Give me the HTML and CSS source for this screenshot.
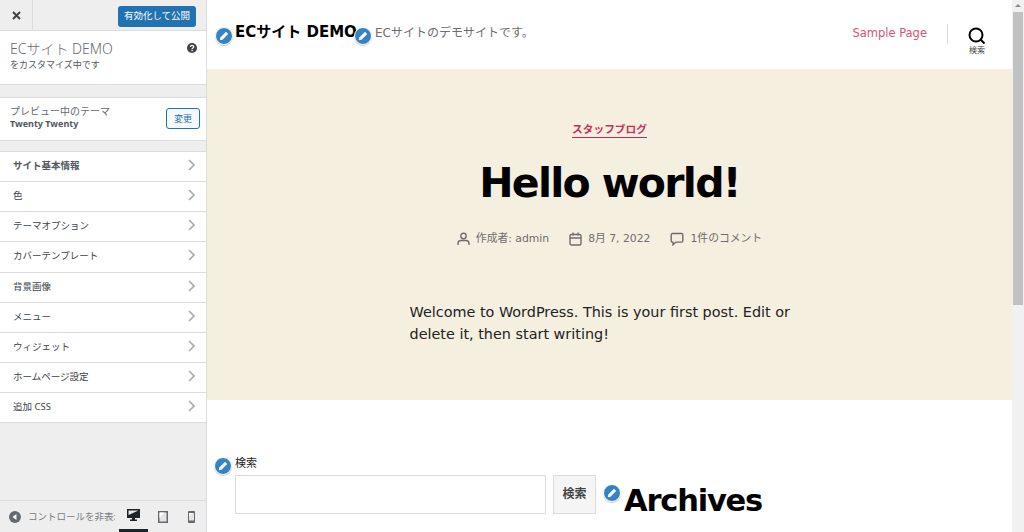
FILE: index.html
```html
<!DOCTYPE html>
<html>

<head>
    <meta charset="utf-8">
    <title>カスタマイズ: ECサイト DEMO</title>
    <link rel="stylesheet" href="styles.css">
</head>

<body>
    <div class="app">
        <aside class="panel">
            <div class="panel-top">
                <div class="close-btn">
                    <svg width="9" height="9" viewBox="0 0 9 9"><path d="M1 1l7 7M8 1l-7 7" stroke="#3c434a" stroke-width="2"/></svg>
                </div>
                <div class="publish-btn">有効化して公開</div>
            </div>
            <div class="info-box">
                <div>
                    <div class="info-title">ECサイト DEMO</div>
                    <div class="info-sub">をカスタマイズ中です</div>
                </div>
                <svg class="help" width="10" height="10" viewBox="0 0 10 10"><circle cx="5" cy="5" r="5" fill="#3c434a"/><path d="M3.4 3.9c0-2.1 3.3-2.1 3.3-.1 0 1.200-1.600 1.200-1.600 2.300" fill="none" stroke="#fff" stroke-width="1.200"/><rect x="4.400" y="6.800" width="1.400" height="1.400" fill="#fff"/></svg>
            </div>
            <div class="theme-box">
                <div>
                    <div class="theme-label">プレビュー中のテーマ</div>
                    <div class="theme-name">Twenty Twenty</div>
                </div>
                <div class="change-btn">変更</div>
            </div>
            <ul class="menu">
                <li class="bold">サイト基本情報<svg class="chev" width="7" height="12" viewBox="0 0 7 12"><path d="M1 1l5 5-5 5" fill="none" stroke="#a7aaad" stroke-width="1.600"/></svg></li>
                <li>色<svg class="chev" width="7" height="12" viewBox="0 0 7 12"><path d="M1 1l5 5-5 5" fill="none" stroke="#a7aaad" stroke-width="1.600"/></svg></li>
                <li>テーマオプション<svg class="chev" width="7" height="12" viewBox="0 0 7 12"><path d="M1 1l5 5-5 5" fill="none" stroke="#a7aaad" stroke-width="1.600"/></svg></li>
                <li>カバーテンプレート<svg class="chev" width="7" height="12" viewBox="0 0 7 12"><path d="M1 1l5 5-5 5" fill="none" stroke="#a7aaad" stroke-width="1.600"/></svg></li>
                <li>背景画像<svg class="chev" width="7" height="12" viewBox="0 0 7 12"><path d="M1 1l5 5-5 5" fill="none" stroke="#a7aaad" stroke-width="1.600"/></svg></li>
                <li>メニュー<svg class="chev" width="7" height="12" viewBox="0 0 7 12"><path d="M1 1l5 5-5 5" fill="none" stroke="#a7aaad" stroke-width="1.600"/></svg></li>
                <li>ウィジェット<svg class="chev" width="7" height="12" viewBox="0 0 7 12"><path d="M1 1l5 5-5 5" fill="none" stroke="#a7aaad" stroke-width="1.600"/></svg></li>
                <li>ホームページ設定<svg class="chev" width="7" height="12" viewBox="0 0 7 12"><path d="M1 1l5 5-5 5" fill="none" stroke="#a7aaad" stroke-width="1.600"/></svg></li>
                <li>追加 CSS<svg class="chev" width="7" height="12" viewBox="0 0 7 12"><path d="M1 1l5 5-5 5" fill="none" stroke="#a7aaad" stroke-width="1.600"/></svg></li>
            </ul>
            <div class="panel-foot">
                <svg width="12" height="12" viewBox="0 0 12 12"><circle cx="6" cy="6" r="6" fill="#646970"/><path d="M7.500 3v6L3.500 6z" fill="#fff"/></svg>
                <div class="hide-label">コントロールを非表示</div>
                <div class="device active">
                    <svg width="13" height="12" viewBox="0 0 13 12"><path d="M0 0h13v9H8v1.500h2V12H3v-1.500h2V9H0z" fill="#1d2327"/><path d="M1.500 1.500h10L1.500 6z" fill="#e8e8e8"/></svg>
                </div>
                <div class="device">
                    <svg width="10" height="12" viewBox="0 0 10 12"><path d="M0 0h10v12H0z" fill="#646970"/><path d="M1.500 1.500h7v9h-7z" fill="#e4e4e4"/><path d="M1.500 1.500h5L1.500 7z" fill="#fff"/></svg>
                </div>
                <div class="device">
                    <svg width="7" height="12" viewBox="0 0 7 12"><rect width="7" height="12" rx="1" fill="#646970"/><path d="M1 2h5v7.500H1z" fill="#e4e4e4"/><path d="M1 2h3.500L1 6z" fill="#fff"/></svg>
                </div>
            </div>
        </aside>

        <main class="preview">
            <header class="site-head">
                <div class="brand">
                    <div class="site-name">ECサイト DEMO</div>
                    <div class="site-desc">ECサイトのデモサイトです。</div>
                </div>
                <nav class="site-nav">
                    <a class="nav-link">Sample Page</a>
                    <div class="nav-sep"></div>
                    <div class="search-toggle">
                        <svg width="18" height="18" viewBox="0 0 18 18"><circle cx="8" cy="8" r="6.500" fill="none" stroke="#000" stroke-width="2"/><path d="M12.500 12.500l4 4" stroke="#000" stroke-width="2"/></svg>
                        <span>検索</span>
                    </div>
                </nav>
                <span class="pencil pencil-name"><svg width="10" height="10" viewBox="0 0 10 10"><path d="M7 .8L9.200 3 3.500 8.700.8 9.200l.5-2.700z" fill="#fff"/></svg></span>
                <span class="pencil pencil-desc"><svg width="10" height="10" viewBox="0 0 10 10"><path d="M7 .8L9.200 3 3.500 8.700.8 9.200l.5-2.700z" fill="#fff"/></svg></span>
            </header>

            <section class="hero">
                <a class="category">スタッフブログ</a>
                <h1 class="post-title">Hello world!</h1>
                <div class="post-meta">
                    <span class="meta-item"><svg width="13" height="14" viewBox="0 0 13 14"><circle cx="6.500" cy="4" r="2.700" fill="none" stroke="#6d6d6d" stroke-width="1.400"/><path d="M1 13v-1.500c0-2 1.500-3 3-3h5c1.500 0 3 1 3 3V13" fill="none" stroke="#6d6d6d" stroke-width="1.400"/></svg>作成者: admin</span>
                    <span class="meta-item"><svg width="13" height="14" viewBox="0 0 13 14"><rect x="1" y="2.500" width="11" height="10.500" rx="1.500" fill="none" stroke="#6d6d6d" stroke-width="1.400"/><path d="M1 6h11M4 .5v3M9 .5v3" stroke="#6d6d6d" stroke-width="1.400"/></svg>8月 7, 2022</span>
                    <span class="meta-item"><svg width="14" height="14" viewBox="0 0 14 14"><path d="M2.500 1.500h9c.7 0 1.300.6 1.300 1.300v6c0 .7-.6 1.300-1.300 1.300H6L3 12.800V10.100h-.5c-.7 0-1.300-.6-1.300-1.300v-6c0-.7.6-1.300 1.300-1.300z" fill="none" stroke="#6d6d6d" stroke-width="1.400"/></svg>1件のコメント</span>
                </div>
                <p class="post-body">Welcome to WordPress. This is your first post. Edit or delete it, then start writing!</p>
            </section>

            <section class="widgets">
                <div class="search-widget">
                    <label class="search-label">検索</label>
                    <div class="search-row">
                        <div class="search-input"></div>
                        <div class="search-btn">検索</div>
                    </div>
                </div>
                <h2 class="archives">Archives</h2>
                <span class="pencil pencil-search"><svg width="10" height="10" viewBox="0 0 10 10"><path d="M7 .8L9.200 3 3.500 8.700.8 9.200l.5-2.700z" fill="#fff"/></svg></span>
                <span class="pencil pencil-arch"><svg width="10" height="10" viewBox="0 0 10 10"><path d="M7 .8L9.200 3 3.500 8.700.8 9.200l.5-2.700z" fill="#fff"/></svg></span>
            </section>

            <div class="scrollbar">
                <div class="scroll-arrow"></div>
                <div class="scroll-thumb"></div>
            </div>
        </main>
    </div>
</body>

</html>
```

FILE: styles.css
```css
* {
    box-sizing: border-box;
}

html, body {
    margin: 0;
    height: 100%;
    overflow: hidden;
}

body {
    font-family: "Noto Sans", "Noto Sans CJK JP", sans-serif;
    background: #fff;
}

.app {
    display: flex;
    height: 532px;
}

/* left panel */
.panel {
    width: 207px;
    flex: none;
    display: flex;
    flex-direction: column;
    background: #eeeeee;
    border-right: 1px solid #dcdcde;
    color: #50575e;
}

.panel-top {
    height: 31px;
    display: flex;
    align-items: center;
    justify-content: space-between;
    padding: 2px 10px 0 0;
    border-bottom: 1px solid #dcdcde;
}

.close-btn {
    width: 33px;
    height: 30px;
    margin-top: -2px;
    display: flex;
    align-items: center;
    justify-content: center;
    border-right: 1px solid #dcdcde;
}

.publish-btn {
    width: 78px;
    height: 21px;
    background: #2271b1;
    border-radius: 3px;
    color: #fff;
    font-size: 9.5px;
    line-height: 20px;
    text-align: center;
}

.info-box {
    height: 54px;
    background: #fff;
    display: flex;
    justify-content: space-between;
    padding: 9px 9px 0 10px;
    border-bottom: 1px solid #dcdcde;
}

.info-title {
    font-size: 14px;
    line-height: 17px;
    font-weight: 300;
    color: #646970;
}

.info-sub {
    margin-top: 1px;
    font-size: 9px;
    line-height: 14px;
    color: #50575e;
}

.help {
    margin-top: 3px;
}

.theme-box {
    height: 44px;
    margin-top: 12px;
    background: #fff;
    display: flex;
    align-items: center;
    justify-content: space-between;
    padding: 0 6px 3px 10px;
    border-top: 1px solid #dcdcde;
    border-bottom: 1px solid #dcdcde;
}

.theme-label {
    font-size: 10px;
    line-height: 13px;
    color: #646970;
}

.theme-name {
    font-size: 9px;
    line-height: 12px;
    font-weight: 700;
    color: #50575e;
}

.change-btn {
    width: 34px;
    height: 21px;
    margin-top: 1px;
    border: 1px solid #2271b1;
    border-radius: 3px;
    background: #f6f7f7;
    color: #2271b1;
    font-size: 9px;
    line-height: 19px;
    text-align: center;
}

.menu {
    list-style: none;
    margin: 10px 0 0;
    padding: 0;
    border-top: 1px solid #dcdcde;
}

.menu li {
    height: 30.15px;
    background: #fff;
    border-bottom: 1px solid #dcdcde;
    display: flex;
    align-items: center;
    justify-content: space-between;
    padding: 0 11px 3px 13px;
    font-size: 9.5px;
    color: #3c434a;
}

.menu li.bold {
    font-weight: 700;
    color: #50575e;
}

.panel-foot {
    margin-top: auto;
    height: 32px;
    display: flex;
    align-items: center;
    border-top: 1px solid #dcdcde;
    padding-left: 9px;
    position: relative;
}

.hide-label {
    width: 88px;
    margin: 0 4px 0 7px;
    font-size: 9.5px;
    line-height: 12px;
    color: #787c82;
    white-space: nowrap;
    overflow: hidden;
}

.device {
    width: 29px;
    height: 31px;
    display: flex;
    align-items: center;
    justify-content: center;
}

.device.active {
    border-bottom: 3px solid #1d2327;
}

/* preview */
.preview {
    flex: 1;
    min-width: 0;
    position: relative;
    padding-right: 12px;
    height: 532px;
    overflow: hidden;
    font-family: "DejaVu Sans", "Noto Sans CJK JP", sans-serif;
}

.site-head {
    height: 69px;
    display: flex;
    align-items: flex-start;
    justify-content: space-between;
    padding: 0 26px 0 28px;
    position: relative;
}

.brand {
    display: flex;
    align-items: baseline;
    padding-top: 21px;
}

.site-name {
    width: 124px;
    overflow: hidden;
    white-space: nowrap;
    font-size: 15px;
    line-height: 22px;
    font-weight: 700;
    color: #000;
}

.site-desc {
    margin-left: 16px;
    font-size: 12px;
    color: #6d6d6d;
}

.site-nav {
    display: flex;
    align-items: flex-start;
}

.nav-link {
    margin-top: 25px;
    font-size: 11.5px;
    line-height: 17px;
    color: #cd2653;
    opacity: 0.8;
}

.nav-sep {
    width: 1px;
    height: 20px;
    margin: 24px 20px 0 20px;
    background: #dcd7ca;
}

.search-toggle {
    margin-top: 27px;
    display: flex;
    flex-direction: column;
    align-items: center;
    font-size: 8px;
    line-height: 12px;
    color: #444;
}

.hero {
    height: 331px;
    background: #f5efe0;
    display: flex;
    flex-direction: column;
    align-items: center;
    padding-top: 54px;
}

.category {
    font-size: 10.7px;
    line-height: 14px;
    font-weight: 700;
    color: #c4305a;
    border-bottom: 1px solid #cd2653;
}

.post-title {
    margin: 17px 0 0;
    font-size: 41px;
    line-height: 56px;
    font-weight: 700;
    letter-spacing: -0.0415em;
    color: #000;
}

.post-meta {
    display: flex;
    gap: 20px;
    margin-top: 19px;
    font-size: 10.8px;
    line-height: 18px;
    color: #6d6d6d;
}

.meta-item {
    display: flex;
    align-items: center;
    gap: 6px;
}

.post-body {
    width: 400px;
    margin: 53px 0 0;
    font-size: 14.4px;
    line-height: 22px;
    color: #222;
}

.widgets {
    position: relative;
    display: flex;
    align-items: flex-start;
    padding: 53px 0 0 28px;
}

.search-label {
    display: block;
    font-size: 11px;
    line-height: 22px;
    color: #222;
}

.search-row {
    display: flex;
    gap: 7px;
}

.search-input {
    width: 311px;
    height: 39px;
    border: 1px solid #dcdcde;
    background: #fff;
}

.search-btn {
    width: 43px;
    height: 39px;
    background: #f5f5f5;
    border: 1px solid #dcdcde;
    font-size: 12px;
    font-weight: 700;
    line-height: 37px;
    text-align: center;
    color: #444;
}

.archives {
    margin: 28px 0 0 28px;
    font-size: 30.5px;
    line-height: 40px;
    font-weight: 700;
    letter-spacing: -1.2px;
    color: #000;
}

/* edit shortcuts sit on top of the page */
.pencil {
    position: absolute;
    width: 18px;
    height: 18px;
    border-radius: 50%;
    background: #3582c4;
    border: 1px solid #fff;
    box-shadow: 0 1px 1px rgba(0, 0, 0, 0.2);
    display: flex;
    align-items: center;
    justify-content: center;
}

.pencil-name { left: 7.5px; top: 27px; }
.pencil-desc { left: 147px; top: 27px; }
.pencil-search { left: 7px; top: 57px; }
.pencil-arch { left: 396px; top: 84px; }

.scrollbar {
    position: absolute;
    top: 0;
    right: 0;
    width: 12px;
    height: 532px;
    background: #f1f1f1;
}

.scroll-arrow {
    width: 0;
    height: 0;
    margin: 4px auto 5px;
    border-left: 3px solid transparent;
    border-right: 3px solid transparent;
    border-bottom: 3px solid #888;
}

.scroll-thumb {
    height: 293px;
    margin: 0 1px;
    background: #c1c1c1;
}
```
